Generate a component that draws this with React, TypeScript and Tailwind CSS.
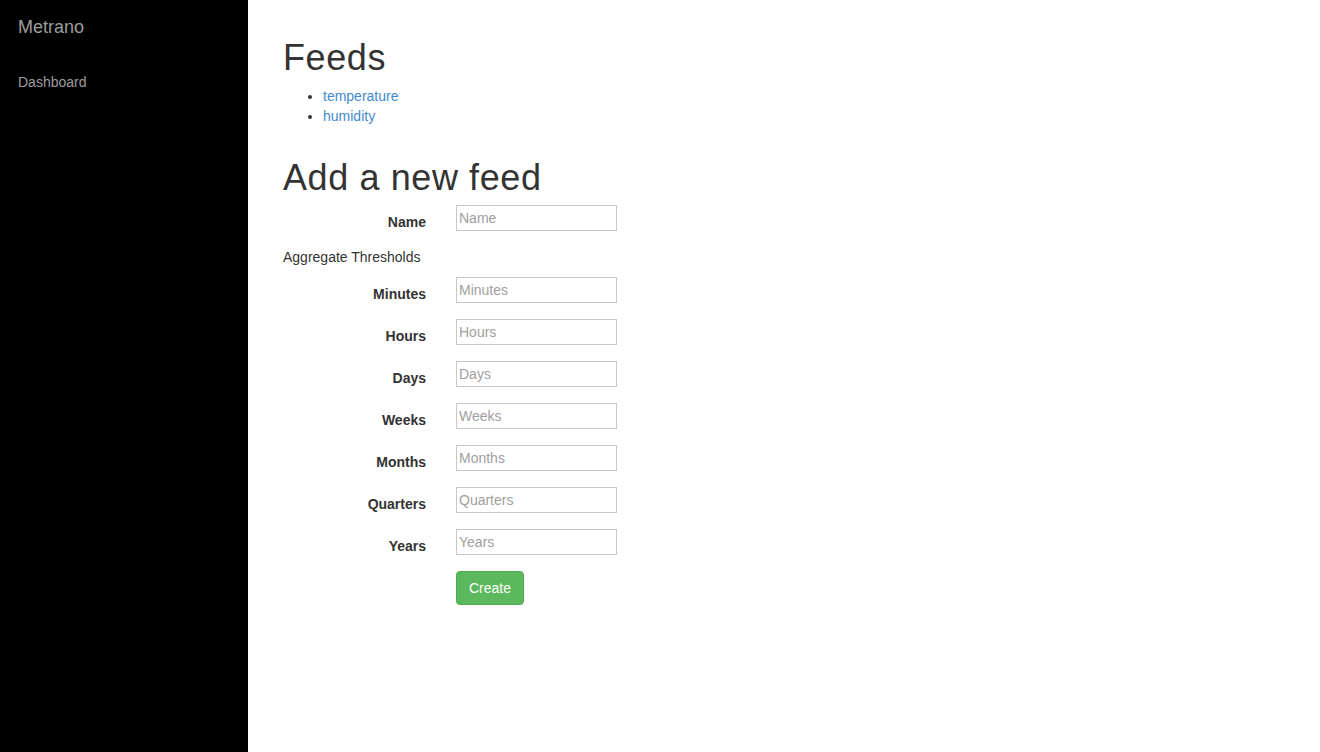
import React from "react";

const fields = ["Minutes", "Hours", "Days", "Weeks", "Months", "Quarters", "Years"];

function Row({ label }: { label: string }) {
  return (
    <div className="flex items-start mb-[15px]">
      <label className="w-[143px] text-right font-bold text-[14px] leading-[20px] pt-[7px] text-[#333333]">
        {label}
      </label>
      <input
        placeholder={label}
        className="ml-[30px] w-[161px] h-[26px] border border-[#c8c8c8] px-[2px] text-[14px] leading-[16px] text-[#333] placeholder:text-[#a0a0a0] outline-none bg-white"
      />
    </div>
  );
}

export default function App() {
  return (
    <div
      className="flex min-h-[752px] w-full bg-white text-[#333333]"
      style={{ fontFamily: '"Liberation Sans", Arial, sans-serif' }}
    >
      <aside className="w-[248px] shrink-0 bg-black px-[18px] pt-[17px]">
        <div className="text-[18px] leading-[20px] text-[#9d9d9d]">Metrano</div>
        <div className="mt-[35px] text-[14px] leading-[20px] text-[#9d9d9d]">Dashboard</div>
      </aside>
      <main className="flex-1 pl-[35px] pt-[38px]">
        <h1 className="text-[36px] leading-[40px] font-normal tracking-[0.6px] mb-[8px]">Feeds</h1>
        <ul className="list-disc pl-[40px] text-[14px] leading-[20px] mb-[32px]">
          <li>
            <a href="#" className="text-[#428bca]">temperature</a>
          </li>
          <li>
            <a href="#" className="text-[#428bca]">humidity</a>
          </li>
        </ul>
        <h1 className="text-[36px] leading-[40px] font-normal tracking-[0.6px] mb-[7px]">Add a new feed</h1>
        <form onSubmit={(e) => e.preventDefault()}>
          <Row label="Name" />
          <p className="text-[14px] leading-[20px] mb-[10px]">Aggregate Thresholds</p>
          {fields.map((f) => (
            <Row key={f} label={f} />
          ))}
          <div className="flex">
            <div className="w-[143px]" />
            <button
              type="submit"
              className="ml-[30px] h-[34px] px-[12px] rounded-[4px] bg-[#5cb85c] border border-[#4cae4c] text-white text-[14px] leading-[20px]"
            >
              Create
            </button>
          </div>
        </form>
      </main>
    </div>
  );
}
